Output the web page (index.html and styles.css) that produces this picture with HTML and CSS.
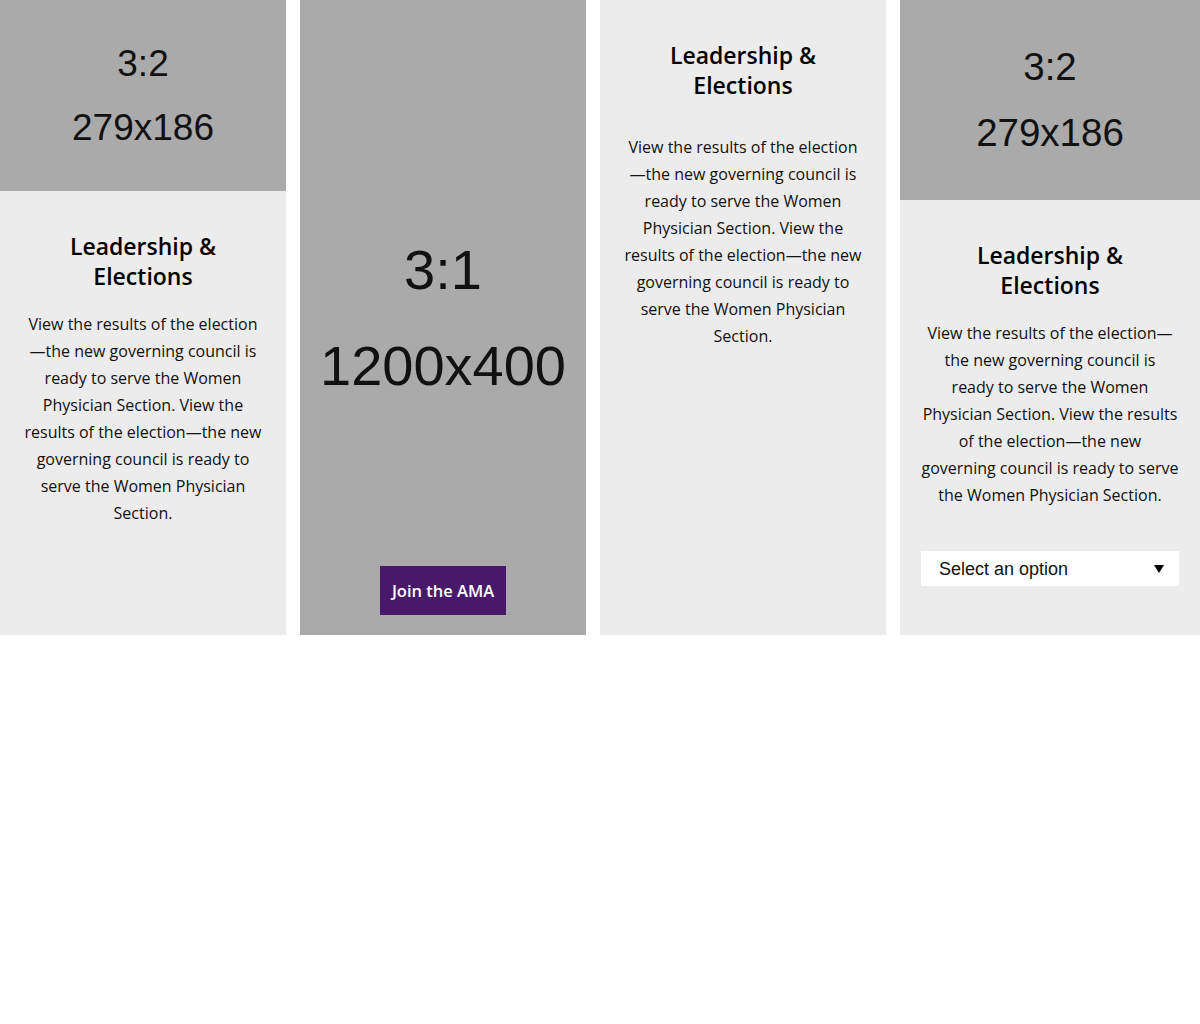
FILE: index.html
```html
<!DOCTYPE html>
<html lang="en">
<head>
<meta charset="utf-8">
<title>Cards</title>
<link rel="stylesheet" href="styles.css">
</head>
<body>
<div class="cards">
  <article class="card">
    <div class="ph ph-a"><span>3:2</span><span>279x186</span></div>
    <div class="body">
      <h2 class="title">Leadership &amp;<br>Elections</h2>
      <p class="text">View the results of the election<br>—the new governing council is<br>ready to serve the Women<br>Physician Section. View the<br>results of the election—the new<br>governing council is ready to<br>serve the Women Physician<br>Section.</p>
    </div>
  </article>
  <article class="card card-hero">
    <div class="ph-hero"><span>3:1</span><span>1200x400</span></div>
    <a class="btn" href="#">Join the AMA</a>
  </article>
  <article class="card">
    <div class="body">
      <h2 class="title">Leadership &amp;<br>Elections</h2>
      <p class="text text-far">View the results of the election<br>—the new governing council is<br>ready to serve the Women<br>Physician Section. View the<br>results of the election—the new<br>governing council is ready to<br>serve the Women Physician<br>Section.</p>
    </div>
  </article>
  <article class="card">
    <div class="ph ph-b"><span>3:2</span><span>279x186</span></div>
    <div class="body">
      <h2 class="title">Leadership &amp;<br>Elections</h2>
      <p class="text">View the results of the election—<br>the new governing council is<br>ready to serve the Women<br>Physician Section. View the results<br>of the election—the new<br>governing council is ready to serve<br>the Women Physician Section.</p>
      <div class="select"><span>Select an option</span><svg class="arrow" width="10" height="8" viewBox="0 0 10 8"><polygon points="0,0 10,0 5,8" fill="#000"/></svg></div>
    </div>
  </article>
</div>
</body>
</html>
```
FILE: styles.css
```css
* { box-sizing: border-box; }
html, body { margin: 0; padding: 0; background: #fff; }
body { font-family: "Open Sans", "Lato", sans-serif; color: #111; }

.cards {
  display: grid;
  grid-template-columns: 286px 286px 286px 300px;
  column-gap: 14px;
  width: 1200px;
}

.card {
  height: 635px;
  background: #ececec;
  display: flex;
  flex-direction: column;
}

.ph {
  background: #aaaaaa;
  display: flex;
  flex-direction: column;
  align-items: center;
  justify-content: center;
  font-family: "Liberation Sans", Arial, sans-serif;
  color: #111;
}
.ph-a { height: 191px; font-size: 37px; line-height: 64px; }
.ph-b { height: 200px; font-size: 38.5px; line-height: 66px; }

.body {
  padding: 0 20px;
  display: flex;
  flex-direction: column;
  align-items: stretch;
  text-align: center;
}

.title {
  margin: 41px 0 0;
  font-size: 23px;
  line-height: 29.5px;
  font-weight: 600;
  color: #000;
  white-space: nowrap;
}

.text {
  margin: 20px 0 0;
  font-size: 16px;
  line-height: 27px;
  color: #111;
  white-space: nowrap;
}
.text-far { margin-top: 34px; }

.card-hero {
  background: #aaaaaa;
  display: grid;
}
.card-hero > * { grid-area: 1 / 1; }
.ph-hero {
  align-self: center;
  justify-self: center;
  display: flex;
  flex-direction: column;
  align-items: center;
  font-family: "Liberation Sans", Arial, sans-serif;
  font-size: 56px;
  line-height: 96px;
  color: #111;
}
.btn {
  align-self: end;
  justify-self: center;
  margin-bottom: 20px;
  width: 126px;
  height: 49px;
  display: flex;
  align-items: center;
  justify-content: center;
  background: #48196a;
  color: #fff;
  font-weight: 600;
  font-size: 16.5px;
  text-decoration: none;
}

.select {
  margin: 42px 1px 0;
  height: 35px;
  background: #fff;
  display: flex;
  align-items: center;
  justify-content: space-between;
  padding: 1px 15px 0 18px;
  font-family: "Liberation Sans", Arial, sans-serif;
  font-size: 18px;
  color: #111;
  text-align: left;
}
.arrow { display: block; }
```
